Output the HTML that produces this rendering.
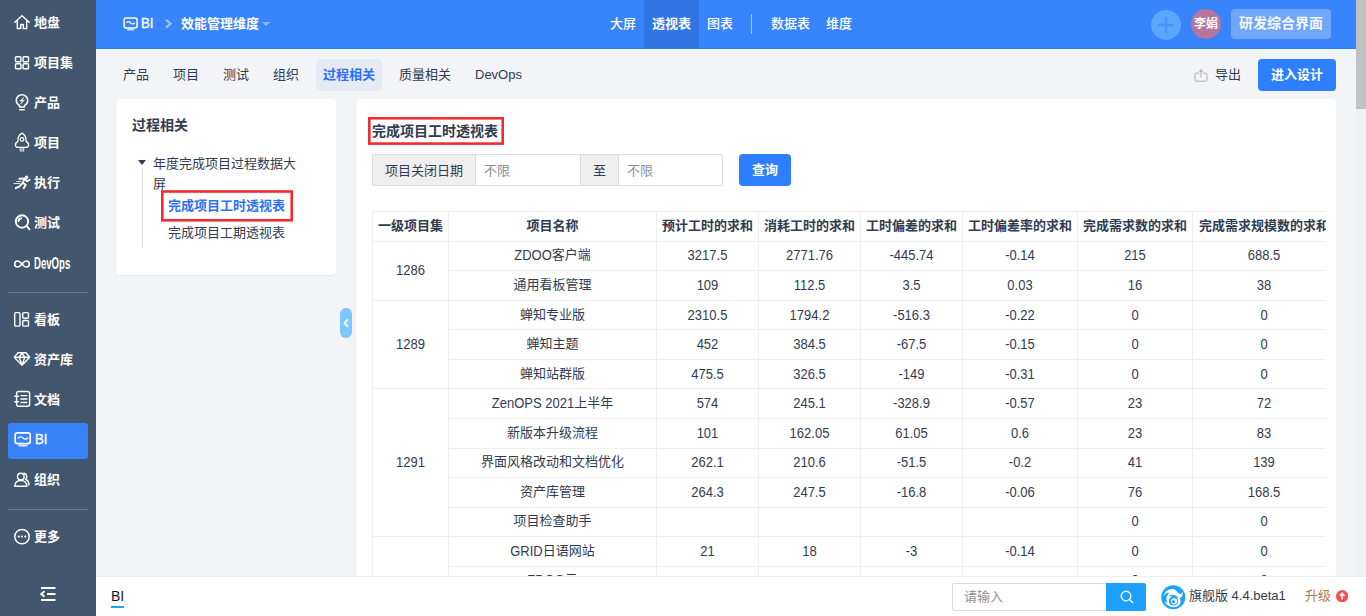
<!DOCTYPE html>
<html lang="zh-CN">
<head>
<meta charset="utf-8">
<title>BI</title>
<style>
*{box-sizing:border-box;margin:0;padding:0}
html,body{width:1366px;height:616px;overflow:hidden;background:#f3f4f7;font-family:"Liberation Sans","Noto Sans CJK SC",sans-serif;font-size:13px;color:#313c52}
.abs{position:absolute}
#side{position:absolute;left:0;top:0;width:96px;height:616px;background:#42566e;color:#fff}
#side .it{position:absolute;left:8px;width:80px;height:36px;border-radius:3px;font-weight:bold;font-size:13px;line-height:36px;white-space:nowrap}
#side .it svg{position:absolute;fill:none;stroke:#fff;stroke-width:1.45;stroke-linecap:round;stroke-linejoin:round}
#side .it span{position:absolute;left:26px;top:1px}
#side .it.act{background:#3883fa}
#side .dv{position:absolute;left:8px;width:80px;height:1px;background:#6b7b8f}
#top{position:absolute;left:96px;top:0;width:1260px;height:49px;background:#3884fc;color:#fff;border-bottom:1px solid #2e7fff}
#top .t{position:absolute;top:0;height:48px;line-height:47px;font-size:13px;white-space:nowrap}
#sub .tab{position:absolute;top:58px;height:33px;line-height:33px;font-size:13px;white-space:nowrap;color:#313c52}
#foot{position:absolute;left:96px;top:576px;width:1270px;height:40px;background:#fff;border-top:1px solid #eceef3}
#sb{position:absolute;left:1356px;top:0;width:10px;height:576px;background:#f1f1f1}
#sb i{position:absolute;left:0;top:0;width:10px;height:109px;background:#c1c1c1}
.panel{position:absolute;background:#fff;border-radius:4px;box-shadow:0 1px 2px rgba(0,0,0,.06)}
table{border-collapse:collapse;position:absolute;left:372px;top:211px;table-layout:fixed;font-size:13px}
td,th{border:1px solid #eee;text-align:center;height:29.57px;line-height:18px;padding:0 0 1px;white-space:nowrap;overflow:hidden;color:#313c52}
th{font-weight:bold;height:30px}
td[rowspan]{padding:0 0 1px}
tr.last td{padding-bottom:3px}
b.l{display:inline-block;font-weight:normal;transform:scaleY(1.09);transform-origin:50% 22%;white-space:pre}
</style>
</head>
<body>
<div id="side">
 <div class="it" style="top:4px"><svg style="left:5px;top:10px;width:18px;height:16px" viewBox="0 0 18 16"><path d="M1.800 8.300L9 1.800l7.200 6.500M4.300 7.300v7.200h3.400v-4h2.600v4h3.400V7.300"/></svg><span>地盘</span></div>
 <div class="it" style="top:44px"><svg style="left:6px;top:11px;width:16px;height:15px" viewBox="0 0 16 15"><rect x="1.500" y="1.800" width="5.400" height="5" rx=".9"/><rect x="9.100" y="1.800" width="5.400" height="5" rx=".9"/><rect x="1.500" y="8.800" width="5.400" height="5" rx=".9"/><rect x="9.100" y="8.800" width="5.400" height="5" rx=".9"/></svg><span>项目集</span></div>
 <div class="it" style="top:84px"><svg style="left:6px;top:9px;width:16px;height:19px;stroke-width:1.500" viewBox="0 0 16 19"><path d="M5.500 12.300C3.500 11.200 2.300 9.400 2.300 7.400a5.700 5.700 0 0 1 11.400 0c0 2-1.200 3.800-3.200 4.900v1.700h-5zM5.800 16.800h4.400" /><path d="M9.800 4.500L5.800 8h2.600l-2 3L10.400 7.300H7.800z" fill="#fff" stroke-width=".5"/></svg><span>产品</span></div>
 <div class="it" style="top:124px"><svg style="left:2px;top:4px;width:24px;height:28px;stroke-width:1.350" viewBox="0 0 24 28"><path d="M12 5.100C9 6.700 7.700 9.800 7.900 13.300C6.100 14.300 5.300 15.800 5.400 17.200C5.500 18.800 6.900 19.500 8.700 19.300H15.300C17.100 19.500 18.500 18.800 18.600 17.200C18.700 15.800 17.900 14.300 16.100 13.300C16.300 9.800 15 6.700 12 5.100z"/><circle cx="12" cy="11.400" r="1.750"/><path d="M10.300 20.600v2.500M12 20.600v2.900M13.700 20.600v2.500" stroke-width="1.100" stroke="#e6e9ee"/></svg><span>项目</span></div>
 <div class="it" style="top:164px"><svg style="left:2px;top:6px;width:24px;height:24px" viewBox="0 0 24 24"><circle cx="16.600" cy="7.300" r="1.700" fill="#fff" stroke="none"/><path d="M9.300 8.700L14.600 8.500L12.800 12.800M14.800 9.200L17.300 11.300L19.600 9.800M12.800 12.800L9.500 16.300L5.800 18.200M12.800 12.800L15.700 14.800L13.700 18.300" stroke-width="1.900"/><path d="M6.500 11.500H11M3.800 13.500H10" stroke-width="1" stroke="#d8dde4"/></svg><span>执行</span></div>
 <div class="it" style="top:204px"><svg style="left:5px;top:9px;width:18px;height:18px;stroke-width:1.900" viewBox="0 0 18 18"><circle cx="9" cy="8.500" r="6.200"/><path d="M13.700 13l2.800 3.300M5.500 8.200a3.300 3.300 0 0 1 2.800-3" /></svg><span>测试</span></div>
 <div class="it" style="top:246px"><svg style="left:5px;top:9px;width:18px;height:18px;stroke-width:1.600" viewBox="0 0 18 18"><path d="M9 9C7.500 7 6.200 6 4.700 6a3 3 0 0 0 0 6C6.200 12 7.500 11 9 9zm0 0c1.500 2 2.800 3 4.300 3a3 3 0 0 0 0-6C11.800 6 10.500 7 9 9z"/></svg><span style="font-size:15px;top:0px;transform:scale(.64,1.1);transform-origin:0 50%">DevOps</span></div>
 <div class="dv" style="top:292px"></div>
 <div class="it" style="top:301px"><svg style="left:5px;top:10px;width:18px;height:17px;stroke-width:1.400" viewBox="0 0 18 17"><rect x="1.700" y="1.600" width="5.300" height="13.500" rx="1.200"/><rect x="9.700" y="1.600" width="5.800" height="5.600" rx="1.200"/><rect x="9.700" y="9.500" width="5.800" height="5.600" rx="1.200"/></svg><span>看板</span></div>
 <div class="it" style="top:341px"><svg style="left:5px;top:10px;width:18px;height:16px" viewBox="0 0 18 16"><path d="M5 1.800h8l3.700 4.400L9 14.300 1.300 6.200zM1.300 6.200h15.400M6.200 6.200L9 14l2.800-7.800L9 2.200z" stroke-width="1.400"/></svg><span>资产库</span></div>
 <div class="it" style="top:381px"><svg style="left:6px;top:9px;width:18px;height:18px" viewBox="0 0 18 18"><rect x="2.600" y="1.500" width="13" height="14.800" rx="2"/><path d="M.800 6.200h3.600M.800 11.800h3.600M7 5.600h5.800M7 9h5.800M7 12.400h5.800"/></svg><span>文档</span></div>
 <div class="it act" style="top:423px;font-weight:normal"><svg style="left:6px;top:8px;width:18px;height:17px" viewBox="0 0 18 17"><rect x="1.200" y="1.800" width="15" height="10.800" rx="2" stroke-width="1.700"/><path d="M5.300 14.600h7.400" stroke-width="1.800" stroke="#dbe8fe"/><path d="M4.300 7c1.500-1.600 3-1.600 4.700 0s3.200 1.600 4.700 0" stroke-width="1.300"/></svg><span style="font-size:13px;left:27px;top:-1px;transform:scale(1.02,1.1);transform-origin:0 50%;-webkit-text-stroke:.3px #fff">BI</span></div>
 <div class="it" style="top:461px"><svg style="left:5px;top:10px;width:18px;height:17px" viewBox="0 0 18 17"><circle cx="7.800" cy="5.500" r="3.300"/><path d="M1.800 15.300c0-3.800 2.400-5.800 6-5.800s6 2 6 5.800zM11 2.300a3.300 3.300 0 0 1 1.300 6c2.200.6 3.600 2.600 3.600 5.700"/></svg><span>组织</span></div>
 <div class="dv" style="top:509px"></div>
 <div class="it" style="top:518px"><svg style="left:5px;top:9px;width:18px;height:18px" viewBox="0 0 18 18"><circle cx="9" cy="9.600" r="7.200"/><circle cx="5.700" cy="9.600" r="1.150" fill="#fff" stroke="none"/><circle cx="9" cy="9.600" r="1.150" fill="#fff" stroke="none"/><circle cx="12.300" cy="9.600" r="1.150" fill="#fff" stroke="none"/></svg><span>更多</span></div>
 <svg class="abs" style="left:39px;top:586px;width:18px;height:16px;fill:none;stroke:#fff;stroke-width:1.800" viewBox="0 0 18 16"><path d="M2 2h14.500M8 8h8.500M2 14h14.500M5.500 5.200L2.200 8l3.300 2.800"/></svg>
</div>

<div id="top">
 <svg class="abs" style="left:26px;top:16px;width:17px;height:16px;fill:none;stroke:#fff;stroke-width:1.500" viewBox="0 0 17 16"><rect x="2.100" y="2.100" width="13" height="9.800" rx="1.800"/><path d="M5.200 13.600h6.800" stroke="#d5e4fe" stroke-width="1.600"/><path d="M4.500 6.800c1.300-1.500 2.700-1.500 4.100 0s2.900 1.500 4.200 0" stroke-width="1.200"/></svg>
 <div class="t" style="left:45px;transform:scale(1.02,1.1);transform-origin:0 50%;-webkit-text-stroke:.3px #fff">BI</div>
 <svg class="abs" style="left:68px;top:18px;width:9px;height:12px;fill:none;stroke:#a3c5fd;stroke-width:2.100" viewBox="0 0 9 12"><path d="M2 1.800L6.500 5.700L2 9.600"/></svg>
 <div class="t" style="left:85px;font-weight:bold">效能管理维度</div>
 <div class="abs" style="left:166px;top:22px;border:4px solid transparent;border-top:4px solid #8db8fc;width:0;height:0"></div>
 <div class="t" style="left:514px;font-weight:500">大屏</div>
 <div class="abs" style="left:548px;top:0;width:55px;height:48px;background:#3075e4"></div>
 <div class="t" style="left:556px;font-weight:bold">透视表</div>
 <div class="t" style="left:611px;font-weight:500">图表</div>
 <div class="abs" style="left:654.500px;top:14px;width:1.500px;height:20px;background:#a9c9fd"></div>
 <div class="t" style="left:675px;font-weight:500">数据表</div>
 <div class="t" style="left:730px;font-weight:500">维度</div>
 <div class="abs" style="left:1055px;top:9.600px;width:30px;height:30px;border-radius:50%;background:#5ba6fe"></div>
 <svg class="abs" style="left:1061px;top:15.600px;width:18px;height:18px;stroke:#4595fd;stroke-width:2.500;fill:none" viewBox="0 0 18 18"><path d="M9 1v16M1 9h16"/></svg>
 <div class="abs" style="left:1095px;top:9px;width:30px;height:30px;border-radius:50%;background:#b5759c;font-size:12px;font-weight:bold;line-height:31px;text-align:center">李娟</div>
 <div class="abs" style="left:1135px;top:9px;width:100px;height:30px;border-radius:4px;background:#70a7fc;font-size:14px;font-weight:bold;line-height:29px;text-align:center;color:#f3f7ff">研发综合界面</div>
</div>

<div id="sub">
 <div class="tab" style="left:123px">产品</div>
 <div class="tab" style="left:173px">项目</div>
 <div class="tab" style="left:223px">测试</div>
 <div class="tab" style="left:273px">组织</div>
 <div class="abs" style="left:316px;top:59px;width:66px;height:32px;border-radius:5px;background:#e6eaf5"></div>
 <div class="tab" style="left:323px;font-weight:bold;color:#2e6ffb">过程相关</div>
 <div class="tab" style="left:399px">质量相关</div>
 <div class="tab" style="left:475px">DevOps</div>
 <svg class="abs" style="left:1193px;top:68px;width:16px;height:15px;fill:none;stroke:#c2c6d0;stroke-width:1.500;stroke-linecap:round" viewBox="0 0 16 15"><path d="M5.500 5.200H3.700a1.700 1.700 0 0 0-1.700 1.700v4.600a1.700 1.700 0 0 0 1.700 1.700h8.600a1.700 1.700 0 0 0 1.700-1.700V6.900a1.700 1.700 0 0 0-1.700-1.700H10.500M8 9V2.200"/><path d="M6.400 3.200L8 1.500l1.600 1.700z" fill="#b5bac6" stroke="#b5bac6" stroke-width=".8"/></svg>
 <div class="tab" style="left:1215px">导出</div>
 <div class="abs" style="left:1258px;top:59px;width:78px;height:32px;border-radius:4px;background:#2e7fff;color:#fff;font-weight:bold;line-height:31px;text-align:center;font-size:13px">进入设计</div>
</div>

<div class="panel" style="left:116px;top:99px;width:220px;height:176px"></div>
<div class="abs" style="left:132px;top:116px;font-size:14px;font-weight:bold;line-height:18px">过程相关</div>
<div class="abs" style="left:138px;top:160px;border:4.5px solid transparent;border-top:5.5px solid #313c52;width:0;height:0"></div>
<div class="abs" style="left:142px;top:168px;width:1px;height:80px;background:#dcdcdc"></div>
<div class="abs" style="left:153px;top:154px;width:150px;line-height:19.5px">年度完成项目过程数据大屏</div>
<svg class="abs" style="left:161px;top:190px;width:132px;height:32px"><rect x="1.300" y="1.500" width="129.400" height="28.800" fill="none" stroke="#f32a30" stroke-width="2.600"/></svg>
<div class="abs" style="left:168px;top:196px;line-height:20px;font-weight:bold;color:#2e70fb">完成项目工时透视表</div>
<div class="abs" style="left:168px;top:223px;line-height:20px">完成项目工期透视表</div>

<div class="abs" style="left:340px;top:308px;width:12px;height:30px;border-radius:6px;background:#7cc7fd"></div>
<svg class="abs" style="left:342px;top:318px;width:8px;height:10px;fill:none;stroke:#fff;stroke-width:1.800" viewBox="0 0 8 10"><path d="M6 1.300L2.500 5.200l3.500 3.600"/></svg>

<div class="panel" style="left:356px;top:99px;width:980px;height:500px;border-radius:4px 4px 0 0"></div>
<svg class="abs" style="left:368px;top:117px;width:136px;height:29px"><rect x="1.300" y="1.300" width="133.400" height="25.300" fill="none" stroke="#f32a30" stroke-width="2.600"/></svg>
<div class="abs" style="left:372px;top:122px;font-size:14px;font-weight:bold;line-height:19px;color:#313c52">完成项目工时透视表</div>

<div class="abs" style="left:372px;top:154px;width:104px;height:32px;background:#efefef;border:1px solid #dcdcdc;border-radius:2px 0 0 2px;line-height:32px;text-align:center">项目关闭日期</div>
<div class="abs" style="left:475px;top:154px;width:106px;height:32px;background:#fff;border:1px solid #dcdcdc;line-height:32px;padding-left:8px;color:#8b8f9a">不限</div>
<div class="abs" style="left:580px;top:154px;width:39px;height:32px;background:#efefef;border:1px solid #dcdcdc;line-height:32px;text-align:center">至</div>
<div class="abs" style="left:618px;top:154px;width:105px;height:32px;background:#fff;border:1px solid #dcdcdc;border-radius:0 2px 2px 0;line-height:32px;padding-left:8px;color:#8b8f9a">不限</div>
<div class="abs" style="left:739px;top:154px;width:52px;height:32px;border-radius:4px;background:#2e7fff;color:#fff;font-weight:bold;line-height:31px;text-align:center">查询</div>

<div class="abs" style="left:372px;top:211px;width:954px;height:365px;overflow:hidden">
<table style="left:0;top:-0.4px;width:963px">
<colgroup><col style="width:76px"><col style="width:208px"><col style="width:102px"><col style="width:102px"><col style="width:102px"><col style="width:115px"><col style="width:115px"><col style="width:143px"></colgroup>
<tr><th>一级项目集</th><th>项目名称</th><th>预计工时的求和</th><th>消耗工时的求和</th><th>工时偏差的求和</th><th>工时偏差率的求和</th><th>完成需求数的求和</th><th>完成需求规模数的求和</th></tr>
<tr><td rowspan="2"><b class="l">1286</b></td><td><b class="l">ZDOO</b>客户端</td><td><b class="l">3217.5</b></td><td><b class="l">2771.76</b></td><td><b class="l">-445.74</b></td><td><b class="l">-0.14</b></td><td><b class="l">215</b></td><td><b class="l">688.5</b></td></tr>
<tr><td>通用看板管理</td><td><b class="l">109</b></td><td><b class="l">112.5</b></td><td><b class="l">3.5</b></td><td><b class="l">0.03</b></td><td><b class="l">16</b></td><td><b class="l">38</b></td></tr>
<tr><td rowspan="3"><b class="l">1289</b></td><td>蝉知专业版</td><td><b class="l">2310.5</b></td><td><b class="l">1794.2</b></td><td><b class="l">-516.3</b></td><td><b class="l">-0.22</b></td><td><b class="l">0</b></td><td><b class="l">0</b></td></tr>
<tr><td>蝉知主题</td><td><b class="l">452</b></td><td><b class="l">384.5</b></td><td><b class="l">-67.5</b></td><td><b class="l">-0.15</b></td><td><b class="l">0</b></td><td><b class="l">0</b></td></tr>
<tr><td>蝉知站群版</td><td><b class="l">475.5</b></td><td><b class="l">326.5</b></td><td><b class="l">-149</b></td><td><b class="l">-0.31</b></td><td><b class="l">0</b></td><td><b class="l">0</b></td></tr>
<tr><td rowspan="5"><b class="l">1291</b></td><td><b class="l">ZenOPS 2021</b>上半年</td><td><b class="l">574</b></td><td><b class="l">245.1</b></td><td><b class="l">-328.9</b></td><td><b class="l">-0.57</b></td><td><b class="l">23</b></td><td><b class="l">72</b></td></tr>
<tr><td>新版本升级流程</td><td><b class="l">101</b></td><td><b class="l">162.05</b></td><td><b class="l">61.05</b></td><td><b class="l">0.6</b></td><td><b class="l">23</b></td><td><b class="l">83</b></td></tr>
<tr><td>界面风格改动和文档优化</td><td><b class="l">262.1</b></td><td><b class="l">210.6</b></td><td><b class="l">-51.5</b></td><td><b class="l">-0.2</b></td><td><b class="l">41</b></td><td><b class="l">139</b></td></tr>
<tr><td>资产库管理</td><td><b class="l">264.3</b></td><td><b class="l">247.5</b></td><td><b class="l">-16.8</b></td><td><b class="l">-0.06</b></td><td><b class="l">76</b></td><td><b class="l">168.5</b></td></tr>
<tr><td>项目检查助手</td><td></td><td></td><td></td><td></td><td><b class="l">0</b></td><td><b class="l">0</b></td></tr>
<tr><td rowspan="3"></td><td><b class="l">GRID</b>日语网站</td><td><b class="l">21</b></td><td><b class="l">18</b></td><td><b class="l">-3</b></td><td><b class="l">-0.14</b></td><td><b class="l">0</b></td><td><b class="l">0</b></td></tr>
<tr class="last"><td><b class="l">ZDOO</b>云</td><td></td><td></td><td></td><td></td><td><b class="l">0</b></td><td><b class="l">0</b></td></tr>
</table>
</div>

<div id="sb"><i></i></div>
<div id="foot">
 <div class="abs" style="left:15px;top:10px;font-size:14px;line-height:18px;color:#14171f;border-bottom:2px solid #1ea0ff;height:21px">BI</div>
 <div class="abs" style="left:856px;top:6px;width:155px;height:28px;border:1px solid #dcdcdc;border-radius:2px 0 0 2px;line-height:26px;padding-left:11px;color:#8b8f9a">请输入</div>
 <div class="abs" style="left:1010px;top:6px;width:40px;height:28px;background:#1ea0ff;border-radius:0 2px 2px 0"></div>
 <svg class="abs" style="left:1022.500px;top:12px;width:16px;height:16px;fill:none;stroke:#fff;stroke-width:1.350" viewBox="0 0 16 16"><circle cx="7" cy="7" r="4.800"/><path d="M10.500 10.500l3.500 3.500"/></svg>
 <svg class="abs" style="left:1065px;top:8px;width:24.500px;height:24.500px" viewBox="-0.300 -0.300 24.600 24.600"><circle cx="12" cy="12" r="12.100" fill="#1fa3f8"/><path fill="#fff" d="M2.500 10.800C3 6.800 6.800 3.700 11.300 3.700c3 0 4.200 2.600 6.200 4.400 1.500 1.300 3.100.8 3.500-1.700 1.200 3.200 0 5.700-2.800 6.300 1.800 2.300 1.500 5.400-.6 7.400-2.700 2.600-7.300 2.500-10.700.3C4.500 18.900 3.500 17.200 3.700 16.300c.7.800 1.500 1.300 2.200 1.300-1.100-2.700-1.100-5.200.2-7.500.7-1.200 1.700-1.800 1.300-2.500C6.800 6.600 4.300 7.900 2.500 10.800z"/><path fill="#1fa3f8" d="M7.600 10.600c2.500-1.700 6.500-1.300 9.800 1.700-2.200-.4-3.300-.2-4.600-.6-1.700-.5-3.500-.9-5.200-1.100z"/><circle cx="12.200" cy="15.700" r="4.700" fill="#1fa3f8"/><circle cx="12.800" cy="16" r="3.100" fill="#fff"/><circle cx="12.300" cy="16.400" r="1.600" fill="#1fa3f8"/></svg>
 <div class="abs" style="left:1093px;top:9px;font-size:13px;line-height:20px;color:#313c52">旗舰版 4.4.beta1</div>
 <div class="abs" style="left:1209px;top:9px;font-size:13px;line-height:20px;color:#b5784b">升级</div>
 <svg class="abs" style="left:1240px;top:13px;width:12.300px;height:12.300px" viewBox="0 0 13 13"><circle cx="6.500" cy="6.500" r="6.500" fill="#f6514f"/><path d="M6.500 10V4M4 6l2.500-2.500L9 6" fill="none" stroke="#fff" stroke-width="1.600"/></svg>
</div>
</body>
</html>
